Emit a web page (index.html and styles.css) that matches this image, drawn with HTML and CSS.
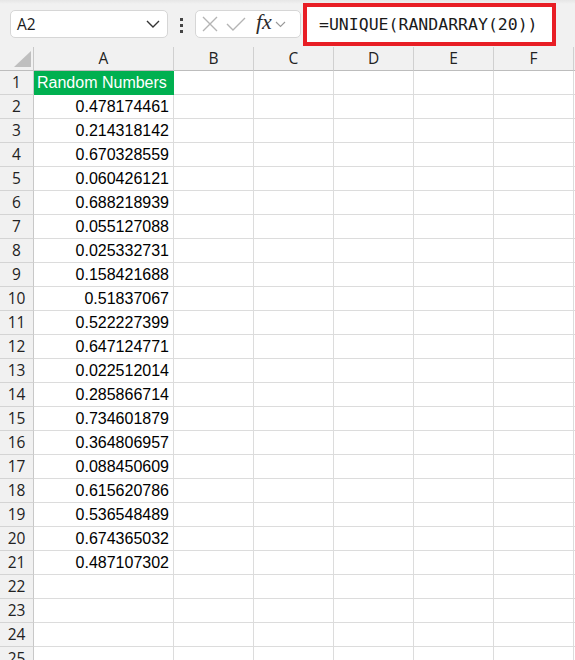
FILE: index.html
```html
<!DOCTYPE html>
<html>
<head>
<meta charset="utf-8">
<link rel="stylesheet" href="styles.css">
</head>
<body>
<div class="toolbar">
  <div class="namebox">
    <span class="name">A2</span>
    <svg class="chev" width="14" height="8" viewBox="0 0 14 8"><path d="M1 1 L7 7 L13 1" fill="none" stroke="#333" stroke-width="1.4"/></svg>
  </div>
  <div class="dots"><i></i><i></i><i></i></div>
  <div class="controls">
    <svg width="16" height="16" viewBox="0 0 16 16"><path d="M1 1 L15 15 M15 1 L1 15" stroke="#b4b4b4" stroke-width="1.4" fill="none"/></svg>
    <svg width="20" height="16" viewBox="0 0 20 16"><path d="M1 8 L7 14 L19 2" stroke="#b4b4b4" stroke-width="1.4" fill="none"/></svg>
    <span class="fx">fx</span>
    <svg width="11" height="7" viewBox="0 0 11 7"><path d="M1 1 L5.5 5.5 L10 1" stroke="#999" stroke-width="1.1" fill="none"/></svg>
  </div>
  <div class="formula">=UNIQUE(RANDARRAY(20))</div>
</div>
<div class="sheet">
  <div class="row head">
    <div class="rh corner"><span class="tri"></span></div>
    <div class="c a">A</div><div class="c">B</div><div class="c">C</div><div class="c">D</div><div class="c">E</div><div class="c">F</div><div class="c g"></div>
  </div>
  <div class="row"><div class="rh">1</div><div class="c a title">Random Numbers</div><div class="c"></div><div class="c"></div><div class="c"></div><div class="c"></div><div class="c"></div><div class="c g"></div></div>
  <div class="row"><div class="rh">2</div><div class="c a num">0.478174461</div><div class="c"></div><div class="c"></div><div class="c"></div><div class="c"></div><div class="c"></div><div class="c g"></div></div>
  <div class="row"><div class="rh">3</div><div class="c a num">0.214318142</div><div class="c"></div><div class="c"></div><div class="c"></div><div class="c"></div><div class="c"></div><div class="c g"></div></div>
  <div class="row"><div class="rh">4</div><div class="c a num">0.670328559</div><div class="c"></div><div class="c"></div><div class="c"></div><div class="c"></div><div class="c"></div><div class="c g"></div></div>
  <div class="row"><div class="rh">5</div><div class="c a num">0.060426121</div><div class="c"></div><div class="c"></div><div class="c"></div><div class="c"></div><div class="c"></div><div class="c g"></div></div>
  <div class="row"><div class="rh">6</div><div class="c a num">0.688218939</div><div class="c"></div><div class="c"></div><div class="c"></div><div class="c"></div><div class="c"></div><div class="c g"></div></div>
  <div class="row"><div class="rh">7</div><div class="c a num">0.055127088</div><div class="c"></div><div class="c"></div><div class="c"></div><div class="c"></div><div class="c"></div><div class="c g"></div></div>
  <div class="row"><div class="rh">8</div><div class="c a num">0.025332731</div><div class="c"></div><div class="c"></div><div class="c"></div><div class="c"></div><div class="c"></div><div class="c g"></div></div>
  <div class="row"><div class="rh">9</div><div class="c a num">0.158421688</div><div class="c"></div><div class="c"></div><div class="c"></div><div class="c"></div><div class="c"></div><div class="c g"></div></div>
  <div class="row"><div class="rh">10</div><div class="c a num">0.51837067</div><div class="c"></div><div class="c"></div><div class="c"></div><div class="c"></div><div class="c"></div><div class="c g"></div></div>
  <div class="row"><div class="rh">11</div><div class="c a num">0.522227399</div><div class="c"></div><div class="c"></div><div class="c"></div><div class="c"></div><div class="c"></div><div class="c g"></div></div>
  <div class="row"><div class="rh">12</div><div class="c a num">0.647124771</div><div class="c"></div><div class="c"></div><div class="c"></div><div class="c"></div><div class="c"></div><div class="c g"></div></div>
  <div class="row"><div class="rh">13</div><div class="c a num">0.022512014</div><div class="c"></div><div class="c"></div><div class="c"></div><div class="c"></div><div class="c"></div><div class="c g"></div></div>
  <div class="row"><div class="rh">14</div><div class="c a num">0.285866714</div><div class="c"></div><div class="c"></div><div class="c"></div><div class="c"></div><div class="c"></div><div class="c g"></div></div>
  <div class="row"><div class="rh">15</div><div class="c a num">0.734601879</div><div class="c"></div><div class="c"></div><div class="c"></div><div class="c"></div><div class="c"></div><div class="c g"></div></div>
  <div class="row"><div class="rh">16</div><div class="c a num">0.364806957</div><div class="c"></div><div class="c"></div><div class="c"></div><div class="c"></div><div class="c"></div><div class="c g"></div></div>
  <div class="row"><div class="rh">17</div><div class="c a num">0.088450609</div><div class="c"></div><div class="c"></div><div class="c"></div><div class="c"></div><div class="c"></div><div class="c g"></div></div>
  <div class="row"><div class="rh">18</div><div class="c a num">0.615620786</div><div class="c"></div><div class="c"></div><div class="c"></div><div class="c"></div><div class="c"></div><div class="c g"></div></div>
  <div class="row"><div class="rh">19</div><div class="c a num">0.536548489</div><div class="c"></div><div class="c"></div><div class="c"></div><div class="c"></div><div class="c"></div><div class="c g"></div></div>
  <div class="row"><div class="rh">20</div><div class="c a num">0.674365032</div><div class="c"></div><div class="c"></div><div class="c"></div><div class="c"></div><div class="c"></div><div class="c g"></div></div>
  <div class="row"><div class="rh">21</div><div class="c a num">0.487107302</div><div class="c"></div><div class="c"></div><div class="c"></div><div class="c"></div><div class="c"></div><div class="c g"></div></div>
  <div class="row"><div class="rh">22</div><div class="c a"></div><div class="c"></div><div class="c"></div><div class="c"></div><div class="c"></div><div class="c"></div><div class="c g"></div></div>
  <div class="row"><div class="rh">23</div><div class="c a"></div><div class="c"></div><div class="c"></div><div class="c"></div><div class="c"></div><div class="c"></div><div class="c g"></div></div>
  <div class="row"><div class="rh">24</div><div class="c a"></div><div class="c"></div><div class="c"></div><div class="c"></div><div class="c"></div><div class="c"></div><div class="c g"></div></div>
  <div class="row"><div class="rh">25</div><div class="c a"></div><div class="c"></div><div class="c"></div><div class="c"></div><div class="c"></div><div class="c"></div><div class="c g"></div></div>
</div>
</body>
</html>
```
FILE: styles.css
```css
html, body {
  margin: 0;
  padding: 0;
  background: #ffffff;
  overflow: hidden;
  width: 575px;
  height: 660px;
}
body {
  font-family: "Liberation Sans", Arial, sans-serif;
  color: #000;
}
.toolbar {
  height: 47px;
  background: linear-gradient(#e6e6e6 0px, #f1f1f1 4px, #f1f1f1 100%);
  display: flex;
  align-items: flex-start;
  box-sizing: border-box;
  padding-left: 10px;
}
.namebox {
  margin-top: 10px;
  width: 158px;
  height: 28px;
  box-sizing: border-box;
  background: #fff;
  border: 1px solid #d6d6d6;
  border-radius: 5px;
  display: flex;
  align-items: center;
  justify-content: space-between;
  padding: 0 7px 0 6px;
  font-family: "Open Sans", "Noto Sans", sans-serif;
  font-size: 15.5px;
  color: #1a1a1a;
}
.namebox .name { margin-top: -1px; }
.dots {
  margin-top: 18px;
  width: 27px;
  display: flex;
  flex-direction: column;
  align-items: center;
  gap: 3px;
}
.dots i {
  display: block;
  width: 3px;
  height: 3px;
  background: #444;
}
.controls {
  margin-top: 10px;
  width: 106px;
  height: 28px;
  box-sizing: border-box;
  background: #fff;
  border: 1px solid #d6d6d6;
  border-radius: 5px;
  display: flex;
  align-items: center;
  padding-left: 6px;
  gap: 8px;
}
.controls .fx {
  font-family: "Liberation Serif", "DejaVu Serif", serif;
  font-style: italic;
  font-size: 22px;
  color: #2b2b2b;
  margin-left: 2px;
  margin-top: -4px;
  margin-right: -5px;
}
.formula {
  margin-top: 3px;
  margin-left: 2px;
  width: 253px;
  height: 43px;
  box-sizing: border-box;
  border: 4px solid #e81e25;
  background: #fff;
  font-family: "DejaVu Sans Mono", "Liberation Mono", monospace;
  font-size: 16.5px;
  color: #1a1a1a;
  padding-left: 12px;
  line-height: 35px;
  white-space: nowrap;
}
.sheet {
  display: flex;
  flex-direction: column;
}
.row {
  display: flex;
  height: 24px;
}
.rh {
  width: 34px;
  flex: none;
  box-sizing: border-box;
  background: #f1f1f1;
  border-right: 1px solid #c8c8c8;
  border-bottom: 1px solid #d4d4d4;
  font-family: "Open Sans", "Noto Sans", sans-serif;
  font-size: 15.5px;
  color: #222;
  text-align: center;
  line-height: 23px;
}
.c {
  width: 80px;
  flex: none;
  box-sizing: border-box;
  border-right: 1px solid #dcdcdc;
  border-bottom: 1px solid #dcdcdc;
  font-size: 16px;
  line-height: 23px;
  white-space: nowrap;
  overflow: hidden;
}
.c.a { width: 140px; }
.c.g { width: 20px; }
.head .c {
  background: #f1f1f1;
  border-right: 1px solid #d0d0d0;
  border-bottom: 1px solid #bdbdbd;
  text-align: center;
  font-family: "Open Sans", "Noto Sans", sans-serif;
  font-size: 15.5px;
  color: #222;
}
.head .rh {
  border-bottom: 1px solid #bdbdbd;
  position: relative;
}
.tri {
  position: absolute;
  right: 2px;
  bottom: 3px;
  width: 0;
  height: 0;
  border-left: 17px solid transparent;
  border-bottom: 16px solid #bfbfbf;
}
.title {
  background: #00b050;
  color: #fff;
  padding-left: 3px;
  border-right-color: #00b050;
  border-bottom-color: #00b050;
}
.num {
  text-align: right;
  padding-right: 4px;
}
```
